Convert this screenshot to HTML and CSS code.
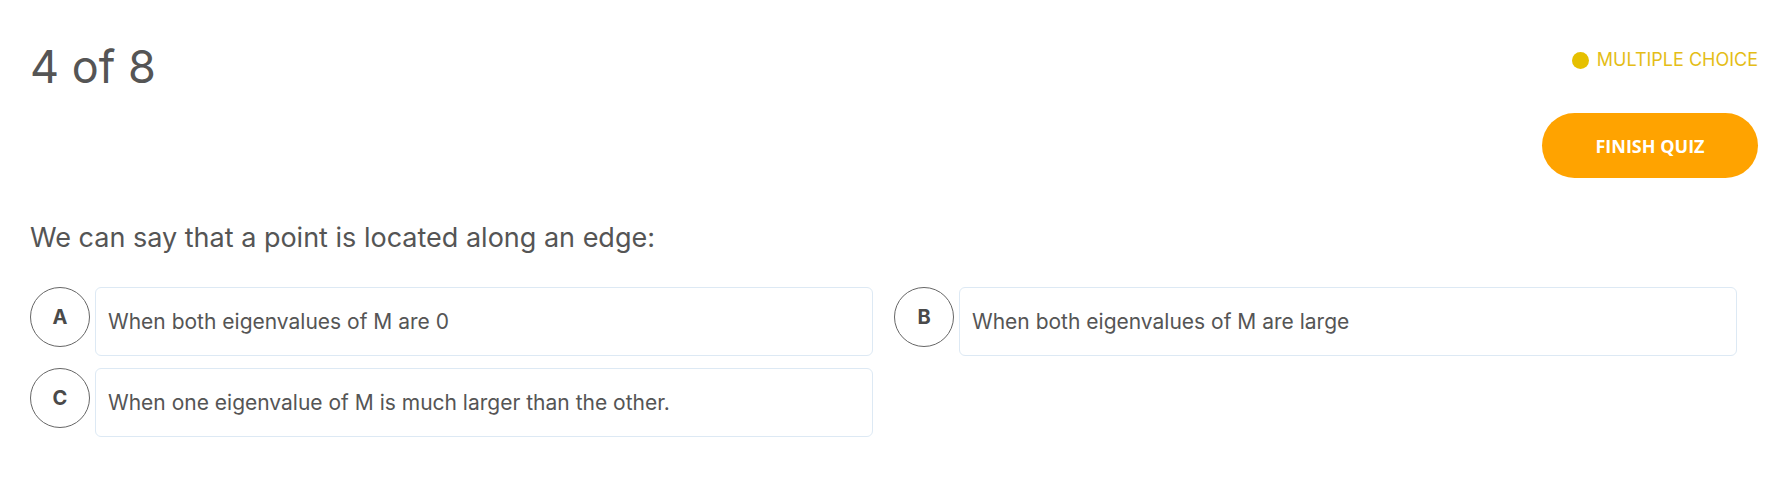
FILE: index.html
```html
<!DOCTYPE html>
<html lang="en">
<head>
<meta charset="utf-8">
<title>Quiz</title>
<link rel="stylesheet" href="styles.css">
</head>
<body>
<div class="page">
  <header class="header">
    <div class="counter">4 of 8</div>
    <div class="meta">
      <div class="type"><span class="dot"></span>MULTIPLE CHOICE</div>
      <button class="finish">FINISH QUIZ</button>
    </div>
  </header>
  <h2 class="question">We can say that a point is located along an edge:</h2>
  <div class="options">
    <div class="option">
      <div class="letter">A</div>
      <div class="answer">When both eigenvalues of M are 0</div>
    </div>
    <div class="option">
      <div class="letter">B</div>
      <div class="answer">When both eigenvalues of M are large</div>
    </div>
    <div class="option">
      <div class="letter">C</div>
      <div class="answer">When one eigenvalue of M is much larger than the other.</div>
    </div>
  </div>
</div>
</body>
</html>
```

FILE: styles.css
```css
html, body {
  margin: 0;
  padding: 0;
  background: #ffffff;
}

body {
  font-family: Inter, "Noto Sans", sans-serif;
  color: #555555;
}

.page {
  padding: 0 24px 0 30px;
}

.header {
  display: flex;
  justify-content: space-between;
  align-items: flex-start;
}

.counter {
  margin-top: 40px;
  font-size: 45px;
  line-height: 54px;
  font-weight: 400;
  color: #555555;
}

.meta {
  display: flex;
  flex-direction: column;
  align-items: flex-end;
  padding-top: 49px;
}

.type {
  display: flex;
  align-items: center;
  gap: 8px;
  font-size: 18px;
  line-height: 22px;
  color: #e4bd17;
}

.dot {
  width: 17px;
  height: 17px;
  border-radius: 50%;
  background: #e6c000;
}

.finish {
  margin-top: 42px;
  width: 216px;
  height: 65px;
  border: none;
  border-radius: 33px;
  background: #ffa300;
  color: #ffffff;
  font-family: "Open Sans", sans-serif;
  font-weight: 700;
  font-size: 18px;
  cursor: pointer;
}

.question {
  margin: 43px 0 0 0;
  font-size: 27px;
  line-height: 33px;
  font-weight: 400;
  color: #555555;
}

.options {
  margin-top: 33px;
  display: grid;
  grid-template-columns: 1fr 1fr;
  row-gap: 12px;
}

.option {
  display: flex;
  align-items: flex-start;
  gap: 5px;
  padding-right: 21px;
}

.letter {
  flex: none;
  width: 58px;
  height: 58px;
  border: 1px solid #666666;
  border-radius: 50%;
  display: flex;
  align-items: center;
  justify-content: center;
  font-weight: 700;
  font-size: 20px;
  color: #4a4a4a;
}

.answer {
  flex: 1;
  min-height: 67px;
  border: 1px solid #dde9f4;
  border-radius: 6px;
  padding: 0 12px;
  display: flex;
  align-items: center;
  font-size: 21px;
  color: #555555;
}
```
